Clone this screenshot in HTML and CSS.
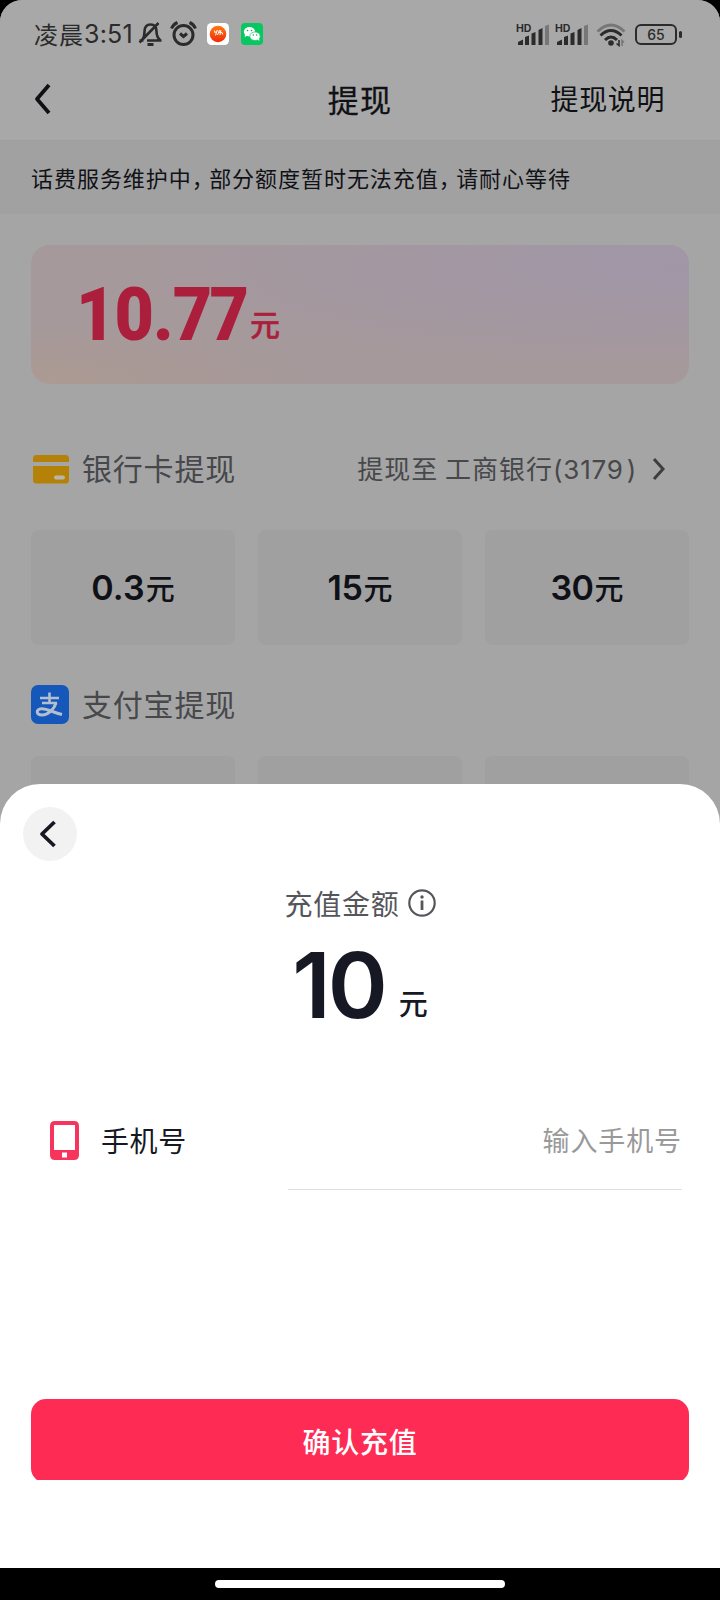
FILE: index.html
```html
<!DOCTYPE html>
<html lang="zh-CN">
<head>
<meta charset="utf-8">
<title>提现</title>
<link rel="stylesheet" href="styles.css">
</head>
<body>
<div class="device">
  <div class="page">
    <div class="status">
      <span class="clock">凌晨<span class="clock-num">3:51</span></span>
      <svg class="bell" width="26" height="28" viewBox="0 0 26 28" fill="none" stroke="#2b2b2b" stroke-width="2.6"><path d="M9 20.500h14.500M1.500 20.500h4M4.500 19.500c1.500-2 2-4 2-8 0-4.500 2-7 6-7s6 2.500 6 7c0 4 .8 6 3.500 8.500M1.500 22.500 20.500 3"/><path d="M9.500 24.500h6" stroke-width="3"/></svg>
      <svg class="alarm" width="28" height="28" viewBox="0 0 28 28" fill="none" stroke="#2b2b2b" stroke-width="3"><circle cx="13.500" cy="15" r="9.500"/><path d="M1.500 8.500Q3.500 4 7.500 2.500M25.500 8.500Q23.500 4 19.500 2.500M10 13.500l3.500 3 3.500-3"/></svg>
      <svg class="app" width="22" height="22" viewBox="0 0 22 22"><defs><linearGradient id="sun" x1="0" y1="0" x2="0" y2="1"><stop offset="0" stop-color="#ff7a12"/><stop offset="1" stop-color="#f02808"/></linearGradient></defs><rect width="22" height="22" rx="4.500" fill="#fff"/><circle cx="11" cy="11" r="8.300" fill="url(#sun)"/><path d="M7.500 7.500l.5 2.300 2.300-2.500-1.800 5M12.500 7l-2 5M12 10l1.800-2.500-.8 4.500M14 9.500l1.300.3.500 1.700" stroke="#fff" stroke-width="1" fill="none"/></svg>
      <svg class="chat" width="22" height="22" viewBox="0 0 22 22"><rect width="22" height="22" rx="4" fill="#07c860"/><ellipse cx="8.500" cy="8.700" rx="5.700" ry="4.700" fill="#fff"/><path d="M4 11l-.3 3 3-1.500z" fill="#fff"/><ellipse cx="14" cy="13.200" rx="5.200" ry="4.300" fill="#fff" stroke="#07c860" stroke-width=".7"/><path d="M16 16l2.300 2-.2-3z" fill="#fff"/><g fill="#07a850"><circle cx="6.600" cy="7.500" r=".8"/><circle cx="10.500" cy="7.500" r=".8"/><circle cx="12.300" cy="12" r=".7"/><circle cx="15.700" cy="12" r=".7"/></g></svg>
      <span class="spacer"></span>
      <span class="signal"><b>HD</b><svg width="33" height="22" viewBox="0 0 33 22" fill="#2b2b2b"><path d="M1 21v-3l5-2.500V21zM8 13l4-1.500V21H8zM14.500 9.500l4-1.500v13h-4zM21.500 6l4-2v17h-4z"/><path d="M28 2l4-1.500V21h-4z" fill="#777"/></svg></span>
      <span class="signal"><b>HD</b><svg width="33" height="22" viewBox="0 0 33 22" fill="#2b2b2b"><path d="M1 21v-3l5-2.500V21zM8 13l4-1.500V21H8zM14.500 9.500l4-1.500v13h-4zM21.500 6l4-2v17h-4z"/><path d="M28 2l4-1.500V21h-4z" fill="#777"/></svg></span>
      <svg class="wifi" width="30" height="24" viewBox="0 0 30 24" fill="none" stroke="#2b2b2b" stroke-width="3"><path d="M1.500 8.500Q15-4.500 28.500 8.500" stroke="#777"/><path d="M4.500 12.500q10.500-10 21 0M9 17q6-6 12 0"/><circle cx="15" cy="20" r="2.800" fill="#2b2b2b" stroke="none"/><path d="M23 17v5.500l-2.500-2" stroke-width="1.600"/><path d="M26 23v-5.500l2 2" stroke="#777" stroke-width="1.600"/></svg>
      <span class="battery">65</span>
    </div>
    <div class="nav">
      <svg class="back" width="17" height="32" viewBox="0 0 17 32" fill="none" stroke="#101114" stroke-width="3.800" stroke-linejoin="round"><path d="M15 2 3 16l12 14"/></svg>
      <h1>提现</h1>
      <span class="help">提现说明</span>
    </div>
    <div class="notice">话费服务维护中<i>，</i>部分额度暂时无法充值<i>，</i>请耐心等待</div>
    <div class="balance"><span class="sum">10.<span class="seven">7</span>7</span><span class="unit">元</span></div>
    <div class="method bank">
      <svg width="38" height="38" viewBox="0 0 38 38"><path d="M2 12V8.500q0-3.500 3.500-3.500h29q3.500 0 3.500 3.500V12zM2 16h36v14q0 3.500-3.500 3.500h-29Q2 33.500 2 30z" fill="#b48208"/><rect x="23" y="25.500" width="11" height="4" rx="2" fill="#b9b5ab"/></svg>
      <span class="name">银行卡提现</span>
      <span class="target">提现至 工商银行<em>(3179<i>)</i></em></span>
      <svg class="go" width="14" height="24" viewBox="0 0 14 24" fill="none" stroke="#3d3e40" stroke-width="3"><path d="M2 2l9 10-9 10"/></svg>
    </div>
    <div class="tiles">
      <div class="tile"><b class="decimal">0.3</b>元</div><div class="tile"><b>15</b>元</div><div class="tile"><b>30</b>元</div>
    </div>
    <div class="method alipay">
      <svg width="38" height="39" viewBox="0 0 38 39"><rect width="38" height="39" rx="7" fill="#1558b9"/><g fill="none" stroke="#b3bfd1" stroke-width="2.600"><path d="M9 13h19M18.500 7.500v10M11 18h15"/><path d="M25 18C23 24.500 17 30 11 30c-6 0-6.500-6-.5-6.300C16 23.400 22 27.500 31 29.500" stroke-width="3"/></g></svg>
      <span class="name">支付宝提现</span>
    </div>
    <div class="tiles"><div class="tile"></div><div class="tile"></div><div class="tile"></div></div>
  </div>

  <div class="sheet">
    <div class="close"><svg width="18" height="28" viewBox="0 0 18 28" fill="none" stroke="#161823" stroke-width="3.800" stroke-linejoin="round"><path d="M15.500 2 3 14l12.500 12"/></svg></div>
    <div class="label">充值金额<svg width="28" height="28" viewBox="0 0 28 28" fill="none" stroke="#55565a" stroke-width="2.200"><circle cx="14" cy="14" r="12.700"/><path d="M14 11.500v9.500" stroke-width="2.800"/><circle cx="14" cy="8" r="1.700" fill="#55565a" stroke="none"/></svg></div>
    <div class="amount"><b>10</b><span>元</span></div>
    <div class="phone">
      <svg width="29" height="39" viewBox="0 0 29 39"><path fill="#f7345b" fill-rule="evenodd" d="M5 0h19q5 0 5 5v29q0 5-5 5H5q-5 0-5-5V5q0-5 5-5zM4 4v25h21V4zM12 31.500v5h5v-5z"/></svg>
      <span class="field-name">手机号</span>
      <div class="field">输入手机号</div>
    </div>
    <div class="action"><div class="confirm">确认充值</div></div>
  </div>
  <div class="home"><span></span></div>
</div>
</body>
</html>
```

FILE: styles.css
```css
* { box-sizing: border-box; }
body { margin: 0; background: #000; }
svg { display: block; flex: none; }
.device {
  position: relative;
  width: 720px;
  height: 1600px;
  overflow: hidden;
  display: flex;
  flex-direction: column;
  justify-content: space-between;
  font-family: "Noto Sans CJK SC", sans-serif;
  white-space: nowrap;
}
.page {
  height: 1568px;
  background: #a5a5a5;
  border-radius: 22px 22px 0 0;
  overflow: hidden;
}
.status {
  display: flex;
  align-items: center;
  height: 68px;
  padding: 0 38px 0 34px;
  background: #a8a8a8;
  color: #2b2b2b;
}
.clock { width: 104px; font-size: 24px; letter-spacing: 1px; line-height: 36px; display: flex; padding-top: 1px; }
.clock-num { font: 25px/37px Inter, sans-serif; letter-spacing: .2px; }
.alarm { margin-left: 6px; }
.app { margin-left: 9px; }
.chat { margin-left: 12px; }
.spacer { flex: 1; }
.signal { position: relative; margin-right: 6px; padding-top: 1px; }
.signal b { position: absolute; left: -1px; top: 0; font: 700 10.500px/12px Inter, sans-serif; }
.wifi { margin: 1px 9px 0 1px; }
.battery {
  position: relative;
  width: 42px;
  height: 21px;
  border: 2.500px solid #2b2b2b;
  border-radius: 6px;
  font: 500 14px/17px Inter, sans-serif;
  text-align: center;
  margin-right: 5px;
}
.battery::after { content: ""; position: absolute; right: -7px; top: 5px; width: 3px; height: 7px; border-radius: 2px; background: #2b2b2b; }
.nav {
  display: grid;
  grid-template-columns: 1fr auto 1fr;
  align-items: center;
  height: 72px;
  padding: 0 45px 10px;
  background: #a8a8a8;
  color: #101114;
}
.back { margin-left: -11px; }
.nav h1 { margin: 0; font-size: 31px; font-weight: 400; -webkit-text-stroke: .3px; line-height: 46px; letter-spacing: 1.200px; padding-bottom: 1px; }
.help { justify-self: end; margin-right: 10px; font-size: 28px; line-height: 42px; letter-spacing: .6px; padding-bottom: 2px; }
.notice {
  height: 74px;
  padding: 0 31px;
  background: #a1a1a1;
  border-top: 1px solid #9d9d9d;
  color: #111217;
  font-size: 22px;
  line-height: 73px;
  letter-spacing: .96px;
}
.notice i { font-style: normal; letter-spacing: -4.600px; }
.balance {
  display: flex;
  align-items: baseline;
  height: 139px;
  margin: 31px 31px 0;
  padding: 25px 0 0 45px;
  border-radius: 19px;
  background:
    radial-gradient(ellipse at 0 100%, #ac9a92 0, rgba(172,154,146,0) 35%),
    radial-gradient(ellipse at 100% 15%, #a096a7 0, rgba(160,150,167,0) 60%),
    #a5999c;
  color: #ab1e3c;
}
.sum { font: 900 74px/90px Roboto, sans-serif; letter-spacing: -1px; width: 175px; transform: scaleX(.92); transform-origin: left; }
.seven { letter-spacing: -3px; }
.unit { font-size: 30px; font-weight: 500; line-height: 40px; position: relative; top: -4px; left: -1px; -webkit-text-stroke: .4px; }
.method { display: flex; align-items: center; color: #47484b; height: 44px; padding: 0 54px 0 31px; }
.bank { margin-top: 63px; }
.name { margin-left: 13px; font-size: 30px; line-height: 44px; letter-spacing: .8px; padding-bottom: 3px; }
.bank .name { padding-bottom: 4px; }
.target { margin-left: auto; font-size: 26px; line-height: 44px; letter-spacing: 1px; padding-bottom: 1px; }
.target em { font: 26px/44px Inter, sans-serif; letter-spacing: .8px; }
.target i { font-style: normal; margin-left: 3px; }
.go { margin-left: 15px; }
.tiles { display: grid; grid-template-columns: repeat(3, 204px); gap: 23px; padding: 0 31px; margin-top: 39px; }
.tile {
  display: flex;
  align-items: baseline;
  justify-content: center;
  gap: 1px;
  height: 115px;
  padding-top: 34px;
  border-radius: 8px;
  background: #a0a0a0;
  color: #101117;
  font-size: 29px;
  font-weight: 500;
  line-height: 46px;
}
.tile b { font: 600 34px/46px Inter, sans-serif; letter-spacing: -.5px; }
.tile .decimal { letter-spacing: .2px; }
.alipay { margin-top: 37px; }
.alipay + .tiles { margin-top: 30px; }
.sheet {
  position: absolute;
  left: 0;
  top: 784px;
  width: 720px;
  height: 784px;
  padding-top: 23px;
  background: #fff;
  border-radius: 40px 40px 0 0;
}
.close { width: 54px; height: 54px; margin-left: 23px; border-radius: 50%; background: #f2f2f2; display: flex; align-items: center; padding-left: 16px; }
.label { display: flex; justify-content: center; align-items: center; gap: 8px; height: 42px; margin-top: 21px; color: #55565a; font-size: 28px; letter-spacing: .8px; }
.amount { display: flex; justify-content: center; align-items: baseline; gap: 14px; height: 110px; margin-top: 6px; color: #161823; }
.amount b { font: 600 91px/110px Inter, sans-serif; letter-spacing: -3px; }
.amount span { font-size: 29px; font-weight: 500; position: relative; top: -3px; }
.phone { display: flex; align-items: center; height: 100px; margin-top: 50px; padding: 0 38px 0 50px; }
.field-name { margin-left: 22px; color: #161823; font-size: 28px; letter-spacing: .6px; width: 187px; padding-bottom: 1px; }
.field { flex: 1; height: 100px; line-height: 99px; border-bottom: 1px solid #e0e0e2; text-align: right; font-size: 27px; letter-spacing: .9px; color: #999; }
.action { height: 81px; margin: 209px 31px 0; overflow: hidden; }
.confirm { height: 84px; border-radius: 15px; background: #fe2c55; color: #fff; font-size: 28px; font-weight: 500; line-height: 84px; letter-spacing: .8px; text-align: center; }
.home { height: 32px; display: flex; justify-content: center; padding-top: 12px; }
.home span { width: 290px; height: 8px; border-radius: 4px; background: #fff; }
```
